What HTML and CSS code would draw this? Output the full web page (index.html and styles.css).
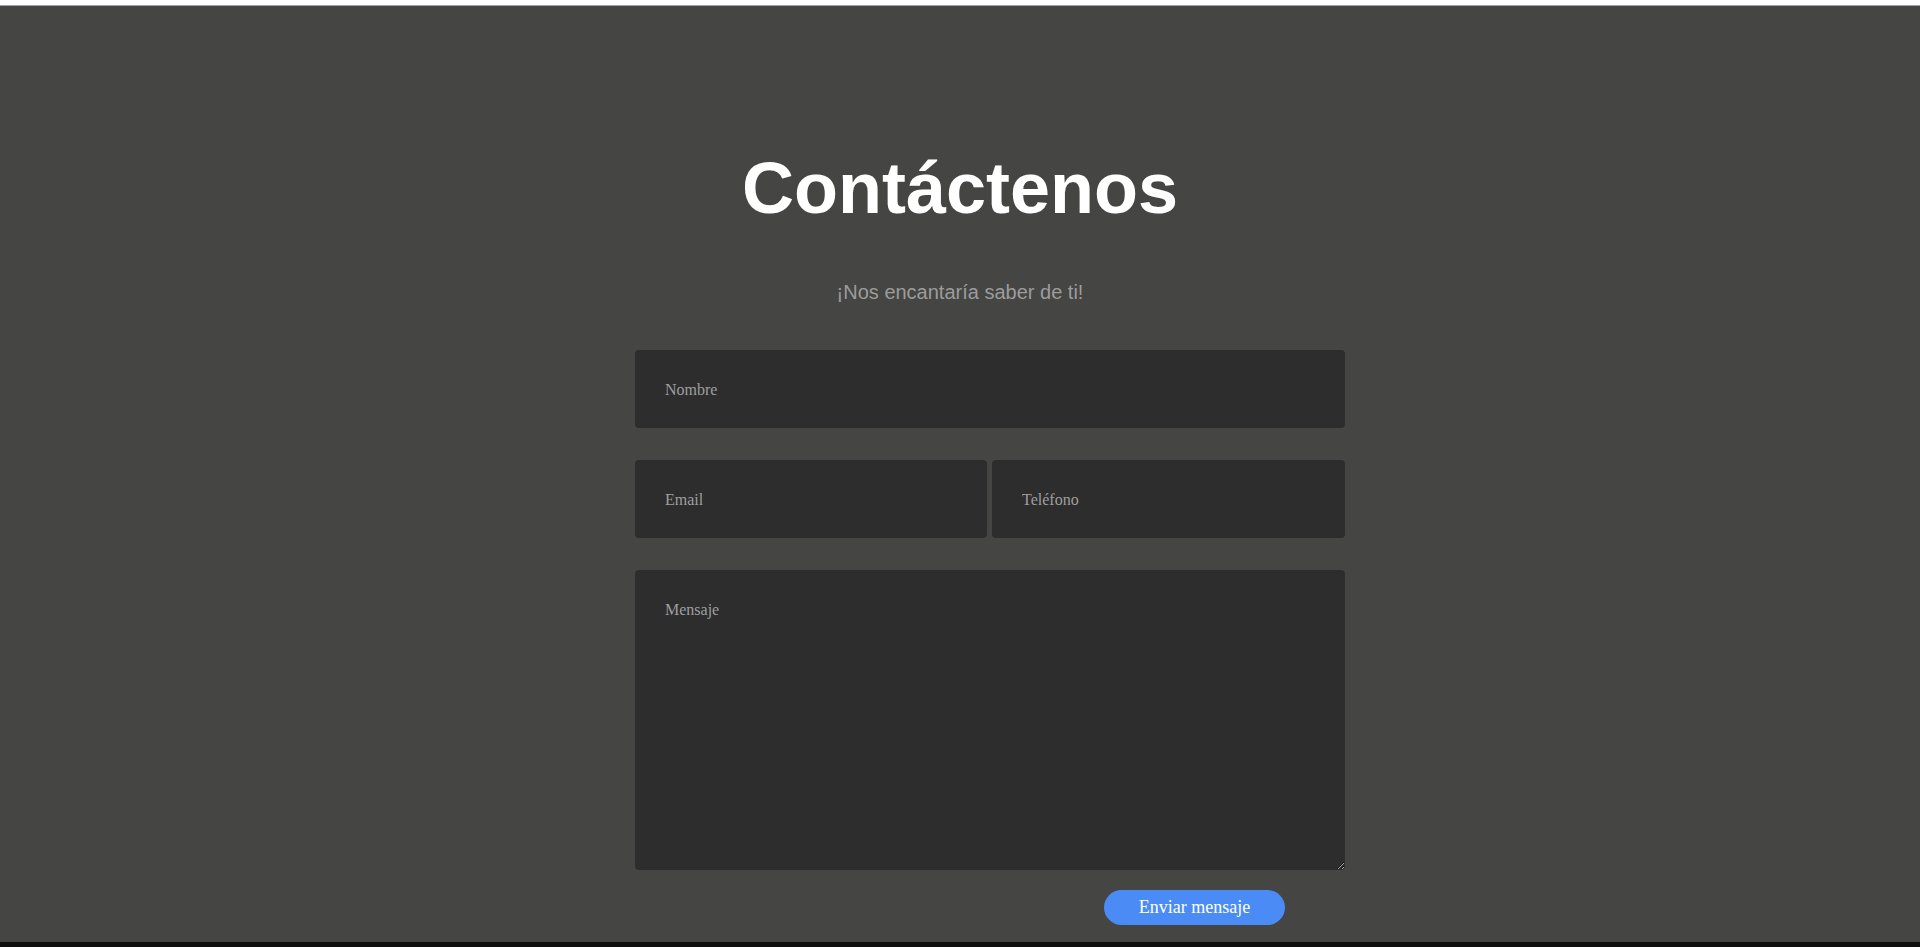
FILE: index.html
```html
<!DOCTYPE html>
<html lang="es">
<head>
<meta charset="utf-8">
<title>Contáctenos</title>
<link rel="stylesheet" href="styles.css">
</head>
<body>
<div class="topbar"></div>
<section class="contact">
  <h1 class="contact-title">Contáctenos</h1>
  <p class="contact-sub">¡Nos encantaría saber de ti!</p>
  <form class="contact-form">
    <input class="field" type="text" placeholder="Nombre">
    <div class="field-row">
      <input class="field" type="email" placeholder="Email">
      <input class="field" type="tel" placeholder="Teléfono">
    </div>
    <textarea class="field field-area" placeholder="Mensaje"></textarea>
    <button class="send-btn" type="button">Enviar mensaje</button>
  </form>
</section>
</body>
</html>
```
FILE: styles.css
```css
html, body {
  margin: 0;
  padding: 0;
}
body {
  background: #0e0e0e;
  height: 947px;
  overflow: hidden;
}
.topbar {
  background: #ffffff;
  border-bottom: 1px solid #a3a3a3;
  box-sizing: border-box;
  height: 6px;
}
.contact {
  background: #454543;
  height: 936px;
  box-sizing: border-box;
  padding-top: 142px;
  display: flex;
  flex-direction: column;
}
.contact-title {
  margin: 0;
  text-align: center;
  font-family: "Liberation Sans", Arial, sans-serif;
  font-weight: 700;
  font-size: 72px;
  line-height: 80px;
  color: #ffffff;
}
.contact-sub {
  margin: 53px 0 0;
  text-align: center;
  font-family: "Liberation Sans", Arial, sans-serif;
  font-size: 20px;
  line-height: 22px;
  color: #9c9c9c;
}
.contact-form {
  margin: 47px 0 0 calc(50% - 325px);
  width: 710px;
  display: flex;
  flex-direction: column;
}
.field {
  display: block;
  box-sizing: border-box;
  width: 100%;
  height: 78px;
  margin: 0;
  padding: 31px 30px 29px;
  border: none;
  border-radius: 4px;
  background: #2d2d2d;
  color: #dddddd;
  font-family: "Liberation Serif", "Times New Roman", serif;
  font-size: 16px;
  outline: none;
}
.field::placeholder {
  color: #9f9f9f;
}
.field-row {
  margin-top: 32px;
  display: grid;
  grid-template-columns: 352px 1fr;
  gap: 5px;
}
.field-area {
  margin-top: 32px;
  height: 300px;
  resize: both;
}
.send-btn {
  align-self: flex-end;
  margin: 20px 60px 0 0;
  width: 181px;
  height: 35px;
  border: none;
  border-radius: 18px;
  background: #4b8bf5;
  color: #ffffff;
  font-family: "Liberation Serif", "Times New Roman", serif;
  font-size: 18px;
  padding: 0;
  cursor: pointer;
}
```
